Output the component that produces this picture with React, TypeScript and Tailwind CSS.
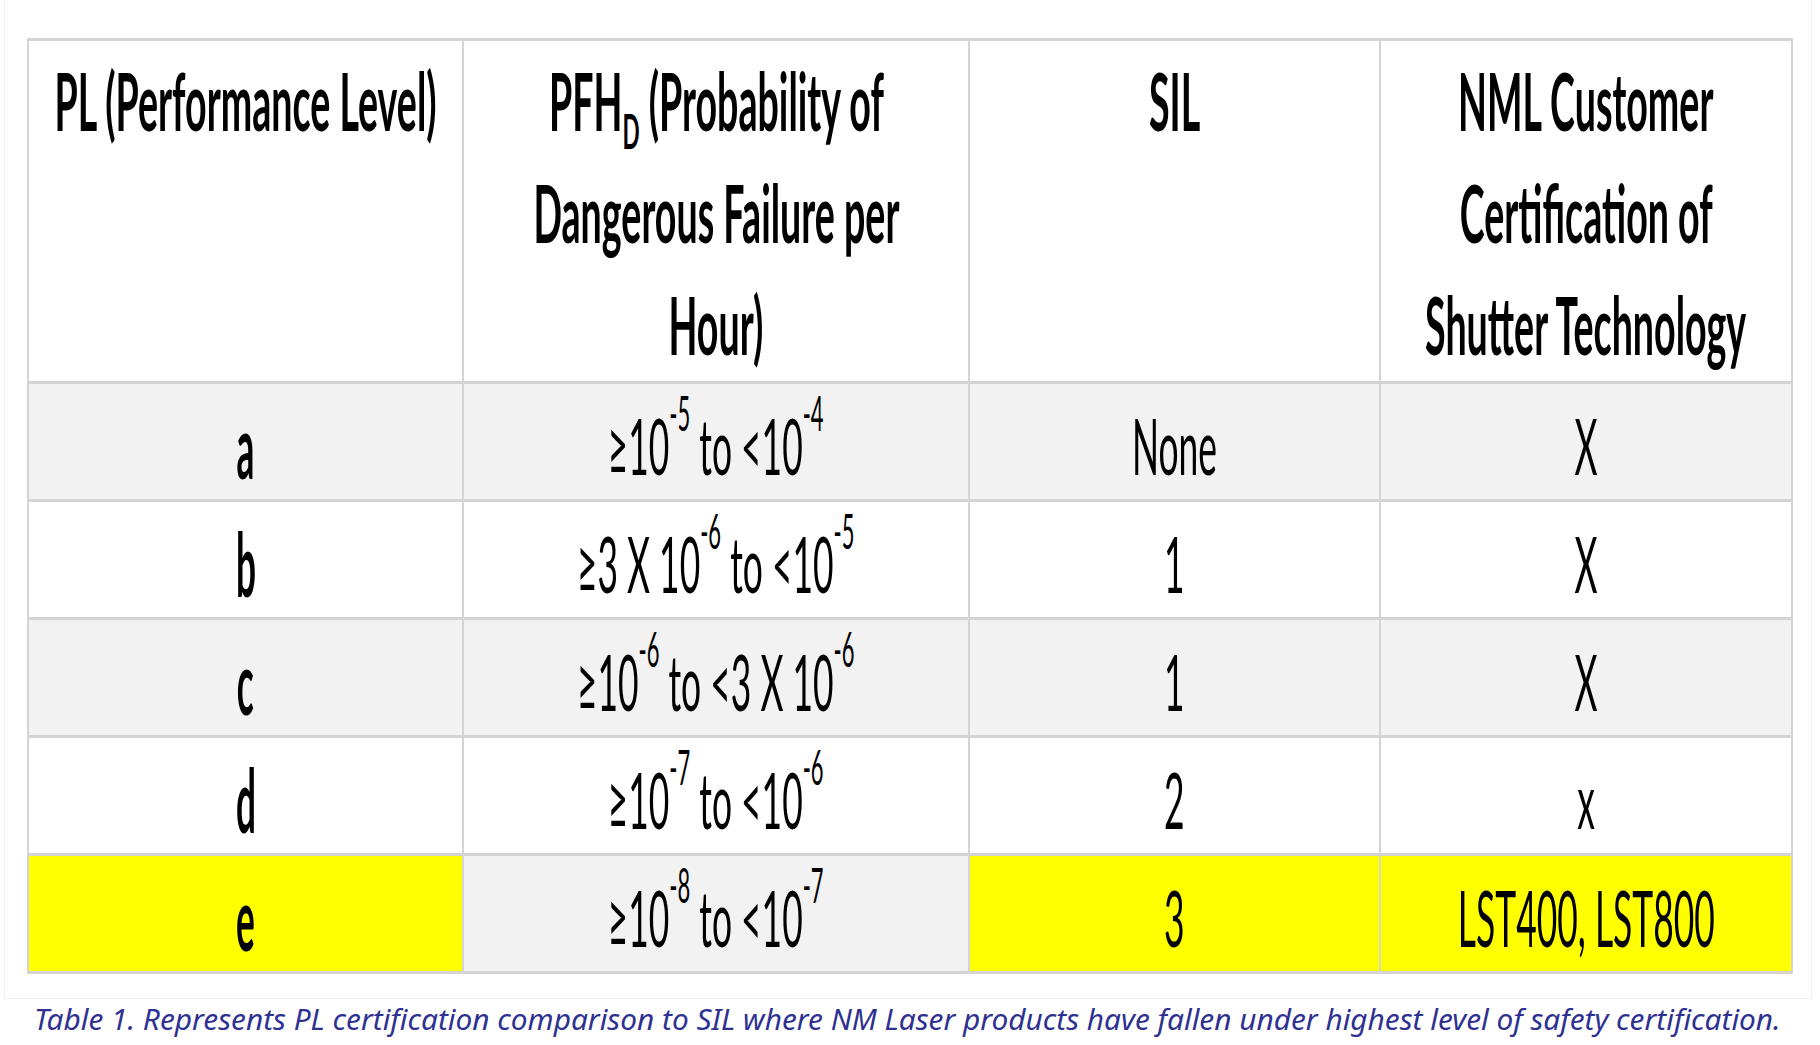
import React from 'react';

// PL vs SIL comparison table, rendered like the squeezed Calibri table in the article image

type Row = {
  pl: string;
  pfh: React.ReactNode;
  sil: string;
  nml: string;
  bg: string;
  plBg?: string;
  pfhBg?: string;
  silBg?: string;
  nmlBg?: string;
};

const Sup: React.FC<{ children: React.ReactNode }> = ({ children }) => (
  <sup className="text-[0.62em] align-[0.42em] leading-none">{children}</sup>
);

const rows: Row[] = [
  {
    pl: 'a',
    pfh: (
      <>
        ≥10<Sup>-5</Sup> to &lt;10<Sup>-4</Sup>
      </>
    ),
    sil: 'None',
    nml: 'X',
    bg: 'bg-[#f2f2f2]',
  },
  {
    pl: 'b',
    pfh: (
      <>
        ≥3 X 10<Sup>-6</Sup> to &lt;10<Sup>-5</Sup>
      </>
    ),
    sil: '1',
    nml: 'X',
    bg: 'bg-white',
  },
  {
    pl: 'c',
    pfh: (
      <>
        ≥10<Sup>-6</Sup> to &lt;3 X 10<Sup>-6</Sup>
      </>
    ),
    sil: '1',
    nml: 'X',
    bg: 'bg-[#f2f2f2]',
  },
  {
    pl: 'd',
    pfh: (
      <>
        ≥10<Sup>-7</Sup> to &lt;10<Sup>-6</Sup>
      </>
    ),
    sil: '2',
    nml: 'x',
    bg: 'bg-white',
  },
  {
    pl: 'e',
    pfh: (
      <>
        ≥10<Sup>-8</Sup> to &lt;10<Sup>-7</Sup>
      </>
    ),
    sil: '3',
    nml: 'LST400, LST800',
    bg: 'bg-[#f2f2f2]',
    plBg: 'bg-[#ffff00]',
    silBg: 'bg-[#ffff00]',
    nmlBg: 'bg-[#ffff00]',
  },
];

const HeaderCell: React.FC<{ lines: React.ReactNode[] }> = ({ lines }) => (
  <div className="flex flex-col items-center pt-[3px] border-r-[2px] border-b-[3px] border-[#d4d4d4] bg-white overflow-hidden">
    {lines.map((line, i) => (
      <span key={i} className="block whitespace-nowrap scale-x-[0.47] text-[80px] leading-[112px] font-bold text-black">
        {line}
      </span>
    ))}
  </div>
);

const BodyCell: React.FC<{ bg: string; bold?: boolean; children: React.ReactNode }> = ({ bg, bold, children }) => (
  <div className={`flex items-center justify-center pt-[8px] border-r-[2px] border-b-[3px] border-[#d4d4d4] overflow-hidden ${bg}`}>
    {bold ? (
      <span className="block whitespace-nowrap scale-x-[0.4] text-[88px] leading-[1.15] font-bold text-black">{children}</span>
    ) : (
      <span className="block whitespace-nowrap scale-x-[0.46] text-[77px] leading-[1.15] text-black">{children}</span>
    )}
  </div>
);

export default function App() {
  return (
    <div className="w-[1820px] h-[1045px] bg-white overflow-hidden font-['Lato','Liberation_Sans',sans-serif]">
      <div className="ml-[4px] w-[1808px] h-[999px] border-x border-b border-[#f1f1f1] pt-[38px] pl-[22px]">
        <div className="grid grid-cols-[435px_506px_411px_412px] grid-rows-[343px_118px_118px_118px_118px_118px] w-[1766px] border-t-[3px] border-l-[2px] border-[#d4d4d4]">
          <HeaderCell lines={['PL (Performance Level)']} />
          <HeaderCell
            lines={[
              <>
                PFH<sub className="text-[0.6em] align-[-0.12em] leading-none">D</sub> (Probability of
              </>,
              'Dangerous Failure per',
              'Hour)',
            ]}
          />
          <HeaderCell lines={['SIL']} />
          <HeaderCell lines={['NML Customer', 'Certification of', 'Shutter Technology']} />

          {rows.map(row => (
            <React.Fragment key={row.pl}>
              <BodyCell bg={row.plBg ?? row.bg} bold>
                {row.pl}
              </BodyCell>
              <BodyCell bg={row.pfhBg ?? row.bg}>{row.pfh}</BodyCell>
              <BodyCell bg={row.silBg ?? row.bg}>{row.sil}</BodyCell>
              <BodyCell bg={row.nmlBg ?? row.bg}>{row.nml}</BodyCell>
            </React.Fragment>
          ))}
        </div>
      </div>
      <p className="pl-[34px] text-[29.8px] leading-[40px] italic text-[#2e3192] font-['Noto_Sans','Open_Sans',sans-serif] whitespace-nowrap">
        Table 1. Represents PL certification comparison to SIL where NM Laser products have fallen under highest level of safety certification.
      </p>
    </div>
  );
}
